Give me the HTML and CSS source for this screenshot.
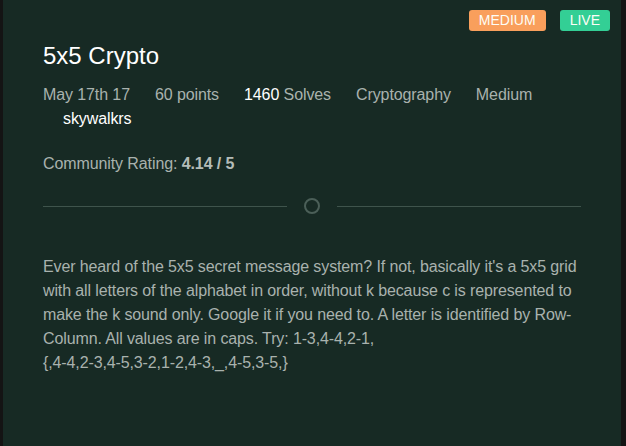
FILE: index.html
```html
<!DOCTYPE html>
<html>
<head>
<meta charset="utf-8">
<link rel="stylesheet" href="styles.css">
</head>
<body>
<div class="panel">
  <div class="badges">
    <span class="badge badge-medium">MEDIUM</span>
    <span class="badge badge-live">LIVE</span>
  </div>
  <div class="content">
    <h1 class="title">5x5 Crypto</h1>
    <div class="meta">
      <span class="meta-item">May 17th 17</span>
      <span class="meta-item">60 points</span>
      <span class="meta-item"><span class="hl">1460</span> Solves</span>
      <span class="meta-item">Cryptography</span>
      <span class="meta-item">Medium</span>
    </div>
    <div class="author">skywalkrs</div>
    <div class="rating">Community Rating: <b>4.14 / 5</b></div>
    <div class="divider">
      <span class="line"></span>
      <span class="circle"></span>
      <span class="line"></span>
    </div>
    <p class="desc">Ever heard of the 5x5 secret message system? If not, basically it's a 5x5 grid with all letters of the alphabet in order, without k because c is represented to make the k sound only. Google it if you need to. A letter is identified by Row-Column. All values are in caps. Try: 1-3,4-4,2-1, <span class="nowrap">{,4-4,2-3,4-5,3-2,1-2,4-3,_,4-5,3-5,}</span></p>
  </div>
</div>
</body>
</html>
```
FILE: styles.css
```css
html, body {
  margin: 0;
  padding: 0;
  height: 100%;
}
body {
  background: #141414;
  font-family: "Liberation Sans", Arial, sans-serif;
  overflow: hidden;
}
.panel {
  margin-left: 3px;
  width: 618px;
  height: 100%;
  background: #172a24;
  box-sizing: border-box;
}
.badges {
  display: flex;
  justify-content: flex-end;
  gap: 14px;
  padding: 10px 11px 0 0;
}
.badge {
  height: 21px;
  line-height: 21px;
  padding: 0 10px;
  border-radius: 3px;
  font-size: 14px;
  color: #fdfdf6;
}
.badge-medium { background: #f99f5c; }
.badge-live { background: #33cf95; }
.content {
  padding: 0 40px;
}
.title {
  margin: 11px 0 0;
  font-size: 24px;
  line-height: 28px;
  font-weight: normal;
  color: #ffffff;
}
.meta {
  margin-top: 13px;
  display: flex;
  gap: 25px;
  font-size: 16px;
  line-height: 24px;
  letter-spacing: -0.1px;
  color: #a9b2ae;
}
.hl { color: #ffffff; }
.author {
  padding-left: 20px;
  font-size: 16px;
  line-height: 24px;
  letter-spacing: -0.1px;
  color: #ffffff;
}
.rating {
  margin-top: 21px;
  font-size: 16px;
  line-height: 24px;
  letter-spacing: -0.1px;
  color: #a9b2ae;
}
.rating b { color: #b4bcb8; }
.divider {
  margin-top: 22px;
  display: flex;
  align-items: center;
  gap: 17px;
  height: 16px;
}
.line {
  flex: 1;
  height: 1px;
  background: #3f544c;
}
.circle {
  width: 12px;
  height: 12px;
  border: 2px solid #4b5f58;
  border-radius: 50%;
}
.desc {
  margin: 41px 0 0;
  font-size: 16px;
  line-height: 24px;
  letter-spacing: -0.12px;
  color: #a9b2ae;
}
.nowrap { white-space: nowrap; }
```
